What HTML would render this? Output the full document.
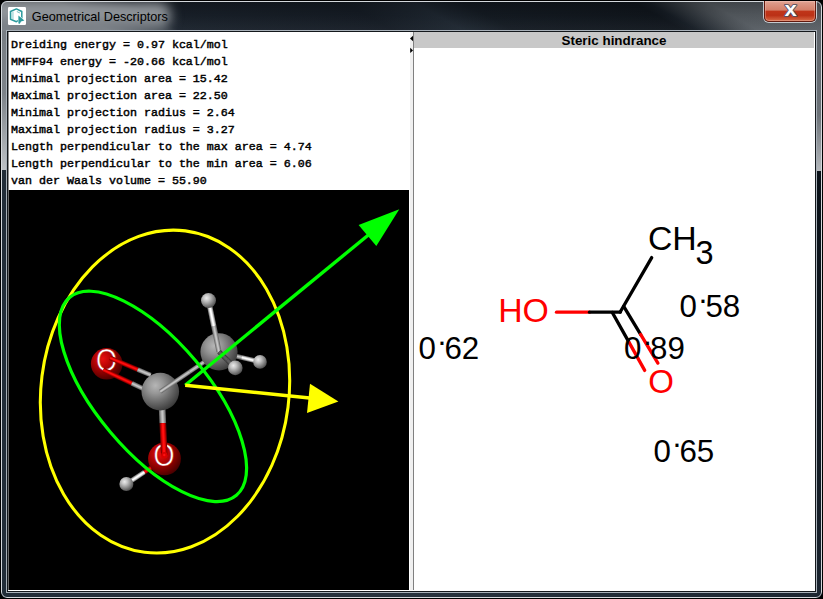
<!DOCTYPE html>
<html><head><meta charset="utf-8"><title>Geometrical Descriptors</title>
<style>
html,body{margin:0;padding:0;background:#000;}
body{width:823px;height:599px;position:relative;overflow:hidden;font-family:"Liberation Sans",sans-serif;}
#win{position:absolute;left:0;top:0;width:821px;height:597px;border:1px solid #000;border-radius:7px;overflow:hidden;
 background:#1c2731;}
#glass{position:absolute;left:0;top:0;width:821px;height:597px;background:linear-gradient(to right,#222d38 0,#27323d 50%,#1c2631 100%);}
#frd{position:absolute;left:814px;top:170px;width:7px;height:427px;background:linear-gradient(#0b1219 0,#0e161e 55%,#1b2530 100%);}
#tbwrap{position:absolute;left:0;top:0;width:821px;height:31px;overflow:hidden;}
#tb{position:absolute;left:-60px;top:0;width:960px;height:31px;transform-origin:0 0;transform:skewX(61deg);
 background:linear-gradient(to right,#80868c 0px,#7d8389 115px,#1b232d 185px,#161d26 400px,#1f2832 470px,#151c24 520px,#11171e 690px,#171e26 704px,#4a5056 746px,#5a6066 764px,#5f656b 960px);}
#tbshade{position:absolute;left:0;top:0;width:821px;height:31px;background:linear-gradient(rgba(0,0,0,.30) 0,rgba(0,0,0,.12) 45%,rgba(255,255,255,.03) 100%);}
#fl{position:absolute;left:0;top:30px;width:7px;height:139px;background:linear-gradient(#787e84 0,#7d8389 45%,#bcc0c4 100%);}
#fr{position:absolute;left:814px;top:30px;width:7px;height:140px;background:linear-gradient(#5f656b 0,#6c7278 60%,#b4b8bc 100%);}
#hl{position:absolute;left:0;top:0;width:819px;height:595px;border:1px solid #d4d8dc;border-radius:6px;}
#glow{position:absolute;left:-30px;top:2px;width:200px;height:27px;background:linear-gradient(#a2a6aa 0,#8b9095 45%,#737980 100%);filter:blur(6px);border-radius:12px;}
#icon{position:absolute;left:7px;top:6px;width:18px;height:18px;}
#title{position:absolute;left:30.8px;top:7.5px;font-size:12.7px;line-height:16px;color:#000;white-space:nowrap;}
#close{position:absolute;left:763px;top:0;width:50px;height:20px;border:1px solid #61190e;border-top:none;border-radius:0 0 5px 5px;
 background:linear-gradient(#e3aa9b 0,#dc9886 12%,#d37f69 46%,#c03519 50%,#bb3116 72%,#cf5a38 92%,#d8734f 100%);box-shadow:0 0 0 1px rgba(225,230,235,.8), inset 0 0 0 1px rgba(255,215,205,.30);}
#close svg{position:absolute;left:0;top:0}
#inner{position:absolute;left:5px;top:29px;width:809px;height:561px;border:1px solid #a8b0b8;}
#inner2{position:absolute;left:6px;top:30px;width:807px;height:559px;border:1px solid #14181c;background:#fff;}
#text{position:absolute;left:7px;top:31px;width:402px;height:158px;background:#fff;border-left:1px solid #909090;}
#text pre{margin:0;position:absolute;left:2px;top:5px;font-family:"Liberation Mono",monospace;font-size:11.67px;line-height:17px;color:#000;font-weight:normal;-webkit-text-stroke:0.45px #000}
#gl{position:absolute;left:7px;top:189px;width:400px;height:400px;background:#000;border-left:1px solid #686868;}
#split{position:absolute;left:409px;top:31px;width:3px;height:558px;background:#f0f0f0;}
#sline{position:absolute;left:412px;top:31px;width:1px;height:558px;background:#808080;}
#hdr{position:absolute;left:413px;top:31px;width:400px;height:16px;background:#c8c8c8;text-align:center;font-weight:bold;font-size:13.4px;line-height:18px;color:#000;overflow:hidden}
#right{position:absolute;left:413px;top:47px;width:401px;height:543px;background:#fff;}
</style></head><body>
<div id="win">
 <div id="glass"></div><div id="tbwrap"><div id="tb"></div></div><div id="tbshade"></div><div id="fl"></div><div id="frd"></div><div id="fr"></div>
 <div id="glow"></div>
 <div id="hl"></div>
 <svg id="icon" viewBox="0 0 18 18"><rect x="0" y="0" width="18" height="18" rx="1.2" fill="#fff"/>
<path d="M8.4 1.9 L13.8 4.5 L13.8 11.5 L8.4 14.7 L2.5 12.3 L2.5 4.5 Z" fill="none" stroke="#2b9a9d" stroke-width="1.5" stroke-linejoin="round"/>
<path d="M3.3 5.3 L5.8 4.6 L5.8 12.8 L3.3 11.8 Z" fill="#7cc8ca" opacity=".5"/>
<path d="M8.8 4.5 L11.9 6" stroke="#2b9a9d" stroke-width="0.9" opacity=".75" fill="none"/>
<path d="M10.4 8.4 L16.4 13.6 L13 14.4 L11.8 16.8 L10.4 16.6 Z" fill="#2b9a9d" stroke="#fff" stroke-width="1.1" paint-order="stroke"/></svg>
 <div id="title">Geometrical Descriptors</div>
 <div id="close"><svg width="50" height="21" viewBox="0 0 50 21"><text x="0" y="0" transform="translate(25.6 15.2) scale(1.13 1)" font-family="'Liberation Sans',sans-serif" font-size="19.5" font-weight="bold" text-anchor="middle" fill="#fff" stroke="#4b4d60" stroke-width="1.6" stroke-linejoin="round" paint-order="stroke">x</text></svg></div>
 <div id="inner"></div><div id="inner2"></div>
 <div id="text"><pre>Dreiding energy = 0.97 kcal/mol
MMFF94 energy = -20.66 kcal/mol
Minimal projection area = 15.42
Maximal projection area = 22.50
Minimal projection radius = 2.64
Maximal projection radius = 3.27
Length perpendicular to the max area = 4.74
Length perpendicular to the min area = 6.06
van der Waals volume = 55.90</pre></div>
 <div id="gl"></div>
<svg id="mol3d" width="823" height="599" viewBox="0 0 823 599" style="position:absolute;left:-1px;top:-1px" font-family="'Liberation Sans',sans-serif">
<defs>
<radialGradient id="gC" cx="37%" cy="34%" r="72%"><stop offset="0" stop-color="#b6b6b6"/><stop offset="0.3" stop-color="#969696"/><stop offset="0.62" stop-color="#6a6a6a"/><stop offset="0.9" stop-color="#444444"/><stop offset="1" stop-color="#363636"/></radialGradient>
<radialGradient id="gO" cx="37%" cy="34%" r="72%"><stop offset="0" stop-color="#e81010"/><stop offset="0.3" stop-color="#c00606"/><stop offset="0.62" stop-color="#8a0000"/><stop offset="0.9" stop-color="#560000"/><stop offset="1" stop-color="#440000"/></radialGradient>
<radialGradient id="gH" cx="37%" cy="34%" r="72%"><stop offset="0" stop-color="#ececec"/><stop offset="0.3" stop-color="#c2c2c2"/><stop offset="0.62" stop-color="#8a8a8a"/><stop offset="0.9" stop-color="#585858"/><stop offset="1" stop-color="#464646"/></radialGradient>
<clipPath id="clipgl"><rect x="9" y="190" width="400" height="400"/></clipPath>
</defs>
<g clip-path="url(#clipgl)">
<line x1="153.1" y1="466.4" x2="144.3" y2="472.2" stroke="#7e0000" stroke-width="4.6"/><line x1="153.1" y1="466.4" x2="144.3" y2="472.2" stroke="#d80000" stroke-width="3.0"/><line x1="153.1" y1="466.4" x2="144.3" y2="472.2" stroke="#ff1010" stroke-width="1.4"/><line x1="144.3" y1="472.2" x2="126.4" y2="484.0" stroke="#8a8a8a" stroke-width="4.6"/><line x1="144.3" y1="472.2" x2="126.4" y2="484.0" stroke="#d4d4d4" stroke-width="3.0"/><line x1="144.3" y1="472.2" x2="126.4" y2="484.0" stroke="#ffffff" stroke-width="1.4"/>
<circle cx="126.4" cy="484" r="7" fill="url(#gH)"/>
<circle cx="106.7" cy="363.8" r="15.8" fill="url(#gO)"/>
<text x="106.6" y="371.29999999999995" font-size="30.5" text-anchor="middle" fill="#fff" stroke="#b00000" stroke-width="0.55" textLength="21" lengthAdjust="spacingAndGlyphs">O</text>
<circle cx="164.5" cy="458.8" r="16.4" fill="url(#gO)"/>
<text x="163.9" y="466.0" font-size="30.5" text-anchor="middle" fill="#fff" stroke="#b00000" stroke-width="0.55" textLength="21" lengthAdjust="spacingAndGlyphs">O</text>
<line x1="110.0" y1="357.8" x2="137.8" y2="369.6" stroke="#7e0000" stroke-width="4.6"/><line x1="110.0" y1="357.8" x2="137.8" y2="369.6" stroke="#d80000" stroke-width="3.0"/><line x1="110.0" y1="357.8" x2="137.8" y2="369.6" stroke="#ff1010" stroke-width="1.4"/><line x1="137.8" y1="369.6" x2="150.6" y2="375.0" stroke="#6e6e6e" stroke-width="4.6"/><line x1="137.8" y1="369.6" x2="150.6" y2="375.0" stroke="#9c9c9c" stroke-width="3.0"/><line x1="137.8" y1="369.6" x2="150.6" y2="375.0" stroke="#c6c6c6" stroke-width="1.4"/>
<line x1="103.3" y1="369.8" x2="131.9" y2="383.3" stroke="#7e0000" stroke-width="4.6"/><line x1="103.3" y1="369.8" x2="131.9" y2="383.3" stroke="#d80000" stroke-width="3.0"/><line x1="103.3" y1="369.8" x2="131.9" y2="383.3" stroke="#ff1010" stroke-width="1.4"/><line x1="131.9" y1="383.3" x2="143.0" y2="388.6" stroke="#6e6e6e" stroke-width="4.6"/><line x1="131.9" y1="383.3" x2="143.0" y2="388.6" stroke="#9c9c9c" stroke-width="3.0"/><line x1="131.9" y1="383.3" x2="143.0" y2="388.6" stroke="#c6c6c6" stroke-width="1.4"/>
<line x1="162.0" y1="405.0" x2="162.8" y2="423.2" stroke="#6e6e6e" stroke-width="6.6"/><line x1="162.0" y1="405.0" x2="162.8" y2="423.2" stroke="#9c9c9c" stroke-width="4.4"/><line x1="162.0" y1="405.0" x2="162.8" y2="423.2" stroke="#c6c6c6" stroke-width="2.0"/><line x1="162.8" y1="423.2" x2="164.3" y2="455.5" stroke="#7e0000" stroke-width="6.6"/><line x1="162.8" y1="423.2" x2="164.3" y2="455.5" stroke="#d80000" stroke-width="4.4"/><line x1="162.8" y1="423.2" x2="164.3" y2="455.5" stroke="#ff1010" stroke-width="2.0"/>
<circle cx="164.3" cy="455.3" r="3.2" fill="#d80000"/><circle cx="164.3" cy="455" r="1.2" fill="#ff1010"/>
<circle cx="160.3" cy="391.6" r="18.8" fill="url(#gC)"/>
<line x1="160.3" y1="391.6" x2="189.7" y2="371.7" stroke="#6e6e6e" stroke-width="4.4"/><line x1="160.3" y1="391.6" x2="189.7" y2="371.7" stroke="#9c9c9c" stroke-width="2.9"/><line x1="160.3" y1="391.6" x2="189.7" y2="371.7" stroke="#c6c6c6" stroke-width="1.3"/><line x1="189.7" y1="371.7" x2="219.0" y2="351.8" stroke="#6e6e6e" stroke-width="4.4"/><line x1="189.7" y1="371.7" x2="219.0" y2="351.8" stroke="#9c9c9c" stroke-width="2.9"/><line x1="189.7" y1="371.7" x2="219.0" y2="351.8" stroke="#c6c6c6" stroke-width="1.3"/>
<line x1="219.0" y1="351.8" x2="241.6" y2="357.4" stroke="#6e6e6e" stroke-width="4.6"/><line x1="219.0" y1="351.8" x2="241.6" y2="357.4" stroke="#9c9c9c" stroke-width="3.0"/><line x1="219.0" y1="351.8" x2="241.6" y2="357.4" stroke="#c6c6c6" stroke-width="1.4"/><line x1="241.6" y1="357.4" x2="260.0" y2="361.9" stroke="#8a8a8a" stroke-width="4.6"/><line x1="241.6" y1="357.4" x2="260.0" y2="361.9" stroke="#d4d4d4" stroke-width="3.0"/><line x1="241.6" y1="357.4" x2="260.0" y2="361.9" stroke="#ffffff" stroke-width="1.4"/>
<circle cx="260" cy="361.9" r="6.8" fill="url(#gH)"/>
<circle cx="219" cy="351.8" r="18.6" fill="url(#gC)"/>
<line x1="219.0" y1="351.8" x2="213.8" y2="326.1" stroke="#6e6e6e" stroke-width="5.2"/><line x1="219.0" y1="351.8" x2="213.8" y2="326.1" stroke="#9c9c9c" stroke-width="3.4"/><line x1="219.0" y1="351.8" x2="213.8" y2="326.1" stroke="#c6c6c6" stroke-width="1.6"/><line x1="213.8" y1="326.1" x2="208.5" y2="300.5" stroke="#8a8a8a" stroke-width="5.2"/><line x1="213.8" y1="326.1" x2="208.5" y2="300.5" stroke="#d4d4d4" stroke-width="3.4"/><line x1="213.8" y1="326.1" x2="208.5" y2="300.5" stroke="#ffffff" stroke-width="1.6"/>
<circle cx="208.5" cy="300.5" r="7.5" fill="url(#gH)"/>
<line x1="219.0" y1="351.8" x2="227.2" y2="359.9" stroke="#3a3a3a" stroke-width="5"/><line x1="219.0" y1="351.8" x2="227.2" y2="359.9" stroke="#565656" stroke-width="3.3"/><line x1="219.0" y1="351.8" x2="227.2" y2="359.9" stroke="#606060" stroke-width="1.5"/><line x1="227.2" y1="359.9" x2="235.3" y2="367.9" stroke="#3a3a3a" stroke-width="5"/><line x1="227.2" y1="359.9" x2="235.3" y2="367.9" stroke="#565656" stroke-width="3.3"/><line x1="227.2" y1="359.9" x2="235.3" y2="367.9" stroke="#606060" stroke-width="1.5"/>
<circle cx="235.3" cy="367.9" r="7.3" fill="url(#gH)"/>
<ellipse cx="165" cy="391.6" rx="124" ry="162" transform="rotate(7.22 165 391.6)" fill="none" stroke="#ffff00" stroke-width="3.05"/>
<ellipse cx="152.95" cy="396.4" rx="55.6" ry="129.4" transform="rotate(-40.16 152.95 396.4)" fill="none" stroke="#00ff00" stroke-width="3.2"/>
<line x1="185.2" y1="385.2" x2="372" y2="232" stroke="#00ff00" stroke-width="3.4"/>
<polygon points="399.3,209.3 358.6,225 376.3,246" fill="#00ff00"/>
<line x1="185.2" y1="385.2" x2="312" y2="398.2" stroke="#ffff00" stroke-width="3.4"/>
<polygon points="338.4,401.5 310,383.7 307,413" fill="#ffff00"/>
</g></svg>
 <div id="split"></div><div id="sline"></div>
 <svg width="6" height="30" viewBox="409 32 6 30" style="position:absolute;left:408px;top:31px"><polygon points="410,38.5 413,35.8 413,41.2" fill="#000"/><polygon points="410.2,47.8 413,50.4 410.2,53" fill="#000"/></svg>
 <div id="hdr">Steric hindrance</div>
 <div id="right"></div>
<svg id="mol2d" width="823" height="599" viewBox="0 0 823 599" style="position:absolute;left:-1px;top:-1px" font-family="'Liberation Sans',sans-serif">
 <g stroke-width="3.3" stroke-linecap="round" fill="none">
  <line x1="556.5" y1="312.2" x2="589.5" y2="312.2" stroke="#f00"/>
  <line x1="589.5" y1="312.2" x2="620.2" y2="312.2" stroke="#000"/>
  <line x1="620.2" y1="312" x2="651.7" y2="257.6" stroke="#000"/>
  <line x1="623.7" y1="306.4" x2="640.6" y2="334.4" stroke="#000"/>
  <line x1="640.6" y1="334.4" x2="657.9" y2="363.1" stroke="#f00"/>
  <line x1="612.3" y1="312.5" x2="628.5" y2="341.4" stroke="#000"/>
  <line x1="628.5" y1="341.4" x2="644.7" y2="370.4" stroke="#f00"/>
 </g>
 <text x="647.9" y="249.9" font-size="33.8" fill="#000">CH<tspan dy="14.2" dx="-1.2" font-size="32.5">3</tspan></text>
 <text x="498.2" y="321.9" font-size="33.8" fill="#f00">HO</text>
 <text x="648.3" y="393" font-size="33" fill="#f00">O</text>
 <g font-size="31.3" fill="#000">
  <text x="679.5" y="316.8">0<tspan dy="-7.2" dx="0.8">·</tspan><tspan dy="7.2" dx="-2.7">58</tspan></text>
  <text x="418.5" y="358.8">0<tspan dy="-7.2" dx="0.8">·</tspan><tspan dy="7.2" dx="-2.7">62</tspan></text>
  <text x="624.1" y="358.7">0<tspan dy="-7.2" dx="0.8">·</tspan><tspan dy="7.2" dx="-2.7">89</tspan></text>
  <text x="653.5" y="461.5">0<tspan dy="-7.2" dx="0.8">·</tspan><tspan dy="7.2" dx="-2.7">65</tspan></text>
 </g>
</svg>
</div>
</body></html>
